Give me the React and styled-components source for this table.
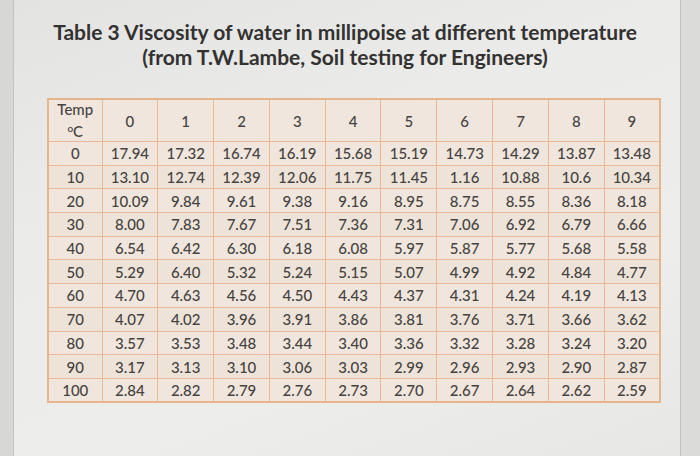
import React from "react";
import styled, { createGlobalStyle } from "styled-components";

const GlobalStyle = createGlobalStyle`
  html, body { margin: 0; padding: 0; }
  body {
    background: #e6e6e5;
    font-family: Lato, "Open Sans", "Liberation Sans", sans-serif;
  }
`;

const Photo = styled.div`
  display: flex;
  width: 700px;
  height: 456px;
  overflow: hidden;
`;

const Edge = styled.div`
  flex: 0 0 ${(p) => p.$w}px;
  background: ${(p) => p.$bg};
  border-${(p) => p.$side}: 1px solid #c2c2c1;
`;

const Sheet = styled.div`
  flex: 1;
  display: flex;
  flex-direction: column;
  background: linear-gradient(160deg, #e3e3e2 0%, #ebebea 35%, #ededec 70%, #e7e7e6 100%);
  padding-top: 19px;
`;

const Title = styled.h1`
  margin: 0;
  text-align: center;
  font-family: Lato, "Open Sans", sans-serif;
  font-weight: 700;
  font-size: 21px;
  line-height: 25px;
  color: #333231;
  padding-right: 4px;
`;

const Table = styled.table`
  margin: 29px 0 0 33px;
  border-collapse: collapse;
  table-layout: fixed;
  width: 612px;
  background: #efe5dc;
  border: 2px solid #e8b48c;
  font-family: Lato, "Open Sans", sans-serif;
  font-size: 15px;
  font-weight: 500;
  color: #464341;
`;

const Col = styled.col`
  width: ${(p) => p.$w}px;
`;

const HeadRow = styled.tr`
  height: 40px;
`;

const Row = styled.tr`
  height: 23.7px;
`;

const Cell = styled.td`
  border: 1.5px solid #eab893;
  text-align: center;
  vertical-align: middle;
  padding: 0;
  line-height: 18px;
  background: ${(p) => (p.$alt ? "#eee3d9" : "#f0e6dd")};
`;

const TempLabel = styled.div`
  line-height: 19px;
`;

const Sup = styled.span`
  font-size: 10px;
  vertical-align: 5px;
`;

const cols = ["0", "1", "2", "3", "4", "5", "6", "7", "8", "9"];

const data = [
  ["0", "17.94", "17.32", "16.74", "16.19", "15.68", "15.19", "14.73", "14.29", "13.87", "13.48"],
  ["10", "13.10", "12.74", "12.39", "12.06", "11.75", "11.45", "1.16", "10.88", "10.6", "10.34"],
  ["20", "10.09", "9.84", "9.61", "9.38", "9.16", "8.95", "8.75", "8.55", "8.36", "8.18"],
  ["30", "8.00", "7.83", "7.67", "7.51", "7.36", "7.31", "7.06", "6.92", "6.79", "6.66"],
  ["40", "6.54", "6.42", "6.30", "6.18", "6.08", "5.97", "5.87", "5.77", "5.68", "5.58"],
  ["50", "5.29", "6.40", "5.32", "5.24", "5.15", "5.07", "4.99", "4.92", "4.84", "4.77"],
  ["60", "4.70", "4.63", "4.56", "4.50", "4.43", "4.37", "4.31", "4.24", "4.19", "4.13"],
  ["70", "4.07", "4.02", "3.96", "3.91", "3.86", "3.81", "3.76", "3.71", "3.66", "3.62"],
  ["80", "3.57", "3.53", "3.48", "3.44", "3.40", "3.36", "3.32", "3.28", "3.24", "3.20"],
  ["90", "3.17", "3.13", "3.10", "3.06", "3.03", "2.99", "2.96", "2.93", "2.90", "2.87"],
  ["100", "2.84", "2.82", "2.79", "2.76", "2.73", "2.70", "2.67", "2.64", "2.62", "2.59"],
];

export default function App() {
  return (
    <>
      <GlobalStyle />
      <Photo>
        <Edge $w={13} $bg="#d7d7d6" $side="right" />
        <Sheet>
          <Title>
            Table 3 Viscosity of water in millipoise at different temperature
            <br />
            (from T.W.Lambe, Soil testing for Engineers)
          </Title>
          <Table>
            <colgroup>
              <Col $w={54} />
              {cols.map((c) => (
                <Col key={c} $w={55.8} />
              ))}
            </colgroup>
            <tbody>
              <HeadRow>
                <Cell>
                  <TempLabel>
                    Temp
                    <br />
                    <Sup>o</Sup>C
                  </TempLabel>
                </Cell>
                {cols.map((c) => (
                  <Cell key={c}>{c}</Cell>
                ))}
              </HeadRow>
              {data.map((r, i) => (
                <Row key={r[0]}>
                  {r.map((v, j) => (
                    <Cell key={j} $alt={i % 2 === 1}>
                      {v}
                    </Cell>
                  ))}
                </Row>
              ))}
            </tbody>
          </Table>
        </Sheet>
        <Edge $w={19} $bg="#dbdbda" $side="left" />
      </Photo>
    </>
  );
}
